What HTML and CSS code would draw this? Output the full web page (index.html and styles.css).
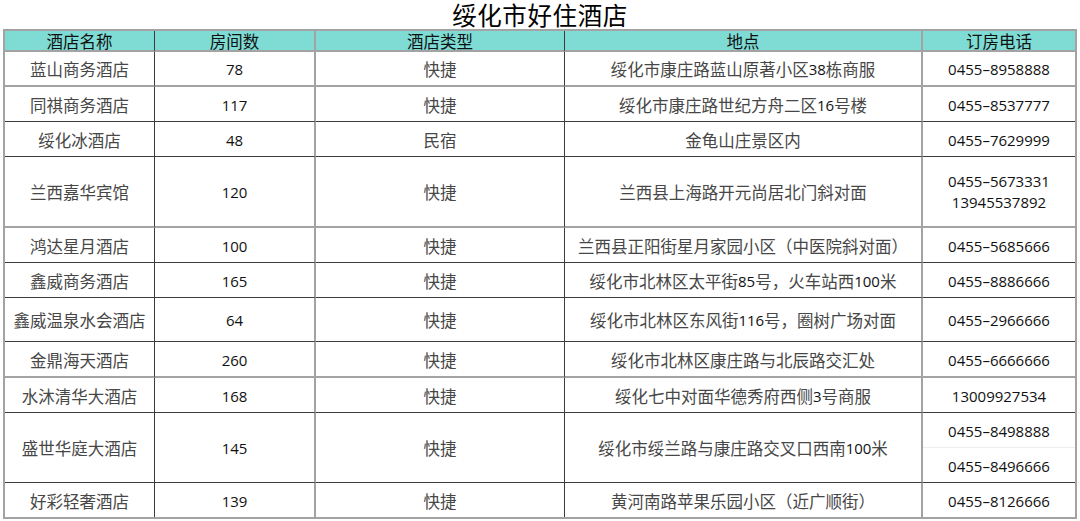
FILE: index.html
```html
<!DOCTYPE html>
<html lang="zh-CN">
<head>
<meta charset="utf-8">
<title>绥化市好住酒店</title>
<link rel="stylesheet" href="styles.css">
</head>
<body>
<div class="page">
  <h1 class="title">绥化市好住酒店</h1>
  <div class="sheet">
    <div class="cell head">酒店名称</div>
    <div class="cell head gr">房间数</div>
    <div class="cell head">酒店类型</div>
    <div class="cell head gr">地点</div>
    <div class="cell head last">订房电话</div>

    <div class="cell gb">蓝山商务酒店</div>
    <div class="cell num gr gb">78</div>
    <div class="cell gb">快捷</div>
    <div class="cell gr gb">绥化市康庄路蓝山原著小区<span class="n">38</span>栋商服</div>
    <div class="cell num last gb">0455–8958888</div>

    <div class="cell">同祺商务酒店</div>
    <div class="cell num gr">117</div>
    <div class="cell">快捷</div>
    <div class="cell gr">绥化市康庄路世纪方舟二区<span class="n">16</span>号楼</div>
    <div class="cell num last">0455–8537777</div>

    <div class="cell">绥化冰酒店</div>
    <div class="cell num gr">48</div>
    <div class="cell">民宿</div>
    <div class="cell gr">金龟山庄景区内</div>
    <div class="cell num last">0455–7629999</div>

    <div class="cell gb">兰西嘉华宾馆</div>
    <div class="cell num gr gb">120</div>
    <div class="cell gb">快捷</div>
    <div class="cell gr gb">兰西县上海路开元尚居北门斜对面</div>
    <div class="cell num last gb two">0455–5673331<br>13945537892</div>

    <div class="cell">鸿达星月酒店</div>
    <div class="cell num gr">100</div>
    <div class="cell">快捷</div>
    <div class="cell gr">兰西县正阳街星月家园小区（中医院斜对面）</div>
    <div class="cell num last">0455–5685666</div>

    <div class="cell">鑫威商务酒店</div>
    <div class="cell num gr">165</div>
    <div class="cell">快捷</div>
    <div class="cell gr">绥化市北林区太平街<span class="n">85</span>号，火车站西<span class="n">100</span>米</div>
    <div class="cell num last">0455–8886666</div>

    <div class="cell">鑫威温泉水会酒店</div>
    <div class="cell num gr">64</div>
    <div class="cell">快捷</div>
    <div class="cell gr">绥化市北林区东风街<span class="n">116</span>号，圈树广场对面</div>
    <div class="cell num last">0455–2966666</div>

    <div class="cell gb">金鼎海天酒店</div>
    <div class="cell num gr gb">260</div>
    <div class="cell gb">快捷</div>
    <div class="cell gr gb">绥化市北林区康庄路与北辰路交汇处</div>
    <div class="cell num last gb">0455–6666666</div>

    <div class="cell">水沐清华大酒店</div>
    <div class="cell num gr">168</div>
    <div class="cell">快捷</div>
    <div class="cell gr">绥化七中对面华德秀府西侧<span class="n">3</span>号商服</div>
    <div class="cell num last">13009927534</div>

    <div class="cell span2">盛世华庭大酒店</div>
    <div class="cell num gr span2">145</div>
    <div class="cell span2">快捷</div>
    <div class="cell gr span2">绥化市绥兰路与康庄路交叉口西南<span class="n">100</span>米</div>
    <div class="cell num last split">0455–8498888</div>
    <div class="cell num last">0455–8496666</div>

    <div class="cell end">好彩轻奢酒店</div>
    <div class="cell num gr end">139</div>
    <div class="cell end">快捷</div>
    <div class="cell gr end">黄河南路苹果乐园小区（近广顺街）</div>
    <div class="cell num last end">0455–8126666</div>
  </div>
</div>
</body>
</html>
```

FILE: styles.css
```css
html, body {
  margin: 0;
  padding: 0;
  background: #ffffff;
}

.page {
  width: 1080px;
  height: 521px;
  padding: 0 3px;
  box-sizing: border-box;
  overflow: hidden;
}

.title {
  margin: 0;
  height: 29px;
  padding-top: 1px;
  box-sizing: border-box;
  line-height: 28px;
  text-align: center;
  font-family: "Noto Sans CJK SC", sans-serif;
  font-weight: 400;
  font-size: 24.5px;
  color: #000;
  letter-spacing: 0.6px;
}

.sheet {
  width: 1074px;
  box-sizing: border-box;
  border: 2px solid #a3a3a3;
  display: grid;
  grid-template-columns: 150px 161px 249px 358px 152px;
  grid-template-rows: 21px 35px 35px 35px 71px 35px 35px 44px 36px 35px 35px 35px 34px;
  font-family: "Noto Sans CJK SC", sans-serif;
  font-size: 16.5px;
  color: #474747;
}

.cell {
  box-sizing: border-box;
  display: flex;
  align-items: center;
  justify-content: center;
  text-align: center;
  white-space: nowrap;
  border-right: 1px solid #3c3c3c;
  border-bottom: 1px solid #3c3c3c;
  line-height: 20px;
  padding-top: 1px;
}

.head {
  background: #7edcd5;
  color: #111;
  border-bottom: 2px solid #a3a3a3;
  padding-top: 0;
}

.gr {
  border-right: 2px solid #a3a3a3;
}

.gb {
  border-bottom: 2px solid #a3a3a3;
}

.last {
  border-right: none;
}

.end {
  border-bottom: none;
}

.span2 {
  grid-row: span 2;
}

.num,
.n {
  font-family: "Open Sans", sans-serif;
  font-size: 15px;
  color: #111;
}

.two {
  line-height: 21px;
}

.split {
  border-bottom: 1px solid #eeeeee;
}
```
